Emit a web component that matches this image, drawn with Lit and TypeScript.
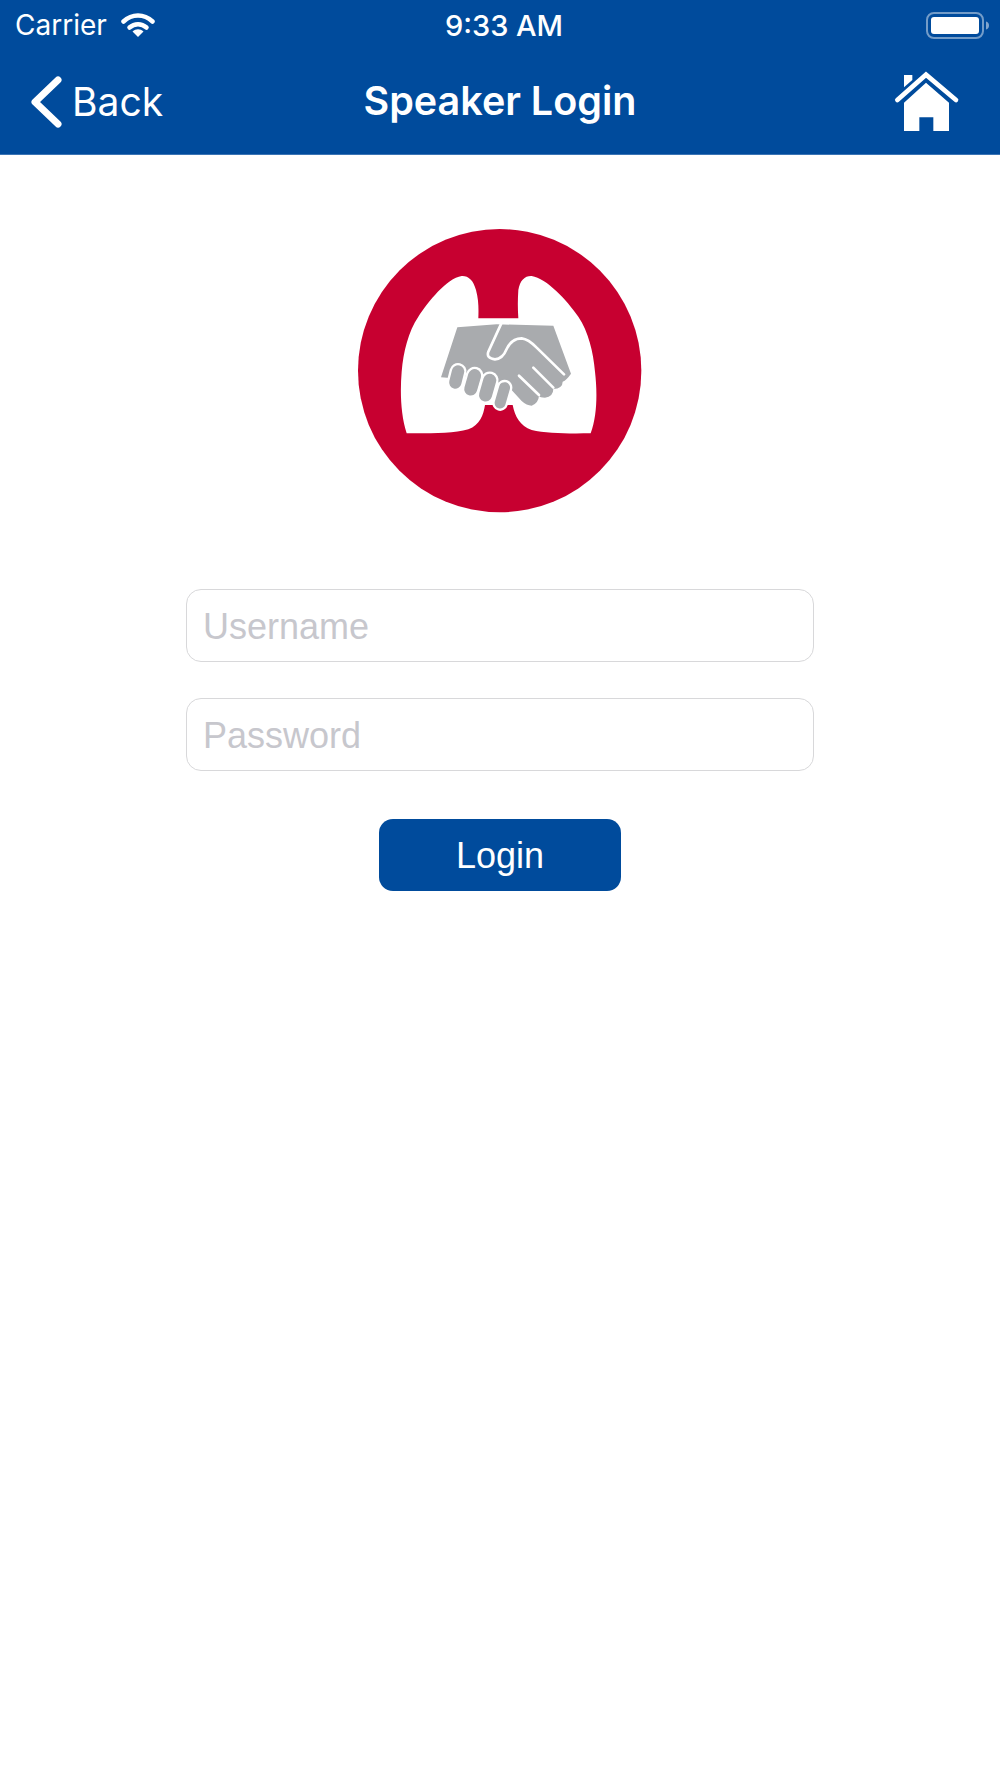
import { css, html, LitElement } from 'lit'
import { customElement } from 'lit/decorators.js'

@customElement('app-root')
export class AppRoot extends LitElement {
  static styles = css`
    :host {
      display: block;
      min-height: 1778px;
      background: #fff;
      font-family: Inter, Roboto, 'Liberation Sans', sans-serif;
    }

    .header {
      background: #004b9c;
      color: #fff;
      height: 154px;
      border-bottom: 1px solid #3a74b5;
    }

    .status {
      display: grid;
      grid-template-columns: 1fr auto 1fr;
      align-items: center;
      height: 50px;
      font-size: 28px;
    }

    .carrier {
      display: flex;
      align-items: center;
      gap: 14px;
      padding-left: 15px;
    }

    .time {
      margin-left: 8px;
      font-size: 29px;
      font-weight: 500;
    }

    .battery {
      justify-self: end;
      margin-right: 10px;
      display: block;
    }

    .nav {
      display: grid;
      grid-template-columns: 1fr auto 1fr;
      align-items: center;
      height: 104px;
    }

    .back {
      display: flex;
      align-items: center;
      gap: 8px;
      padding-left: 28px;
      font-size: 39px;
    }

    .back span,
    .title {
      margin-bottom: 2px;
    }

    .title {
      font-size: 39.500px;
      font-weight: 600;
    }

    .home {
      justify-self: end;
      margin: 0 20px 5px 0;
      display: block;
    }

    .logo {
      display: block;
      margin: 60px auto 0;
    }

    .form {
      display: flex;
      flex-direction: column;
      align-items: center;
      margin-top: 54px;
    }

    input {
      box-sizing: border-box;
      width: 628px;
      height: 73px;
      margin-bottom: 36px;
      padding: 2px 16px 0;
      background: #fff;
      border: 1px solid #d8d8da;
      border-radius: 15px;
      outline: none;
      font-family: 'Liberation Sans', Arial, sans-serif;
      font-size: 36px;
    }

    input::placeholder {
      color: #c7c7cd;
      opacity: 1;
    }

    button {
      width: 242px;
      height: 72px;
      margin-top: 12px;
      padding: 2px 0 0;
      background: #004b9c;
      border: none;
      border-radius: 14px;
      color: #fff;
      font-family: 'Liberation Sans', Arial, sans-serif;
      font-size: 36px;
    }
  `

  render () {
    return html`
      <div class="header">
        <div class="status">
          <div class="carrier">
            <span>Carrier</span>
            <svg width="34" height="24" viewBox="0 0 34 24">
              <path d="M2.5 8.5C11 .5 23 .5 31.5 8.5" fill="none" stroke="#fff" stroke-width="4.500" stroke-linecap="round"/>
              <path d="M8.5 14.5C13.5 10 20.500 10 25.500 14.500" fill="none" stroke="#fff" stroke-width="4.500" stroke-linecap="round"/>
              <path d="M11.500 18.500C15 15.500 19 15.500 22.500 18.500L17 24Z" fill="#fff"/>
            </svg>
          </div>
          <span class="time">9:33 AM</span>
          <svg class="battery" width="64" height="28" viewBox="0 0 64 28">
            <rect x="1" y="2" width="56" height="25" rx="7" fill="none" stroke="#fff" stroke-opacity=".45" stroke-width="2"/>
            <rect x="5" y="6" width="48" height="17" rx="3" fill="#fff"/>
            <path d="M60 10.500c2 .5 3 2 3 4s-1 3.500-3 4z" fill="#fff" fill-opacity=".5"/>
          </svg>
        </div>
        <div class="nav">
          <div class="back">
            <svg width="36" height="54" viewBox="0 0 36 54">
              <polyline points="30,5 7,27 30,49" fill="none" stroke="#fff" stroke-width="7" stroke-linecap="round" stroke-linejoin="round"/>
            </svg>
            <span>Back</span>
          </div>
          <span class="title">Speaker Login</span>
          <svg class="home" width="100" height="80" viewBox="0 0 300 240">
            <path d="M72 45H97V60L72 82Z" fill="#fff"/>
            <polyline points="52,120 138,44 228,120" fill="none" stroke="#fff" stroke-width="14" stroke-linecap="round"/>
            <path d="M72 128L138 68L207 128V213H160V172H118V213H72Z" fill="#fff"/>
          </svg>
        </div>
      </div>

      <svg class="logo" width="320" height="320" viewBox="0 0 960 960">
        <circle cx="479" cy="467" r="425" fill="#c70030"/>
        <path d="M415 310C416 280 416 255 408 225C400 195 385 182 365 183C320 190 265 260 235 305C205 350 190 410 185 470C180 530 182 600 200 655C270 655 340 656 385 643C420 630 430 600 435 570L518 570C525 605 540 632 575 645C620 656 690 656 752 655C772 600 772 530 765 470C760 410 745 350 715 305C680 255 620 190 575 183C555 182 540 195 535 225C533 255 533 280 535 310Z" fill="#fff"/>
        <path d="M352 337L470 328L640 332L693 476Q680 495 668 500Q668 520 640 522Q640 545 615 548Q600 548 597 543Q595 565 575 572Q560 572 545 558L510 520L470 500L303 487Z" fill="#a9abae"/>
        <g fill="#a9abae" stroke="#fff" stroke-width="7">
          <rect x="328" y="447" width="44" height="78" rx="22" transform="rotate(14 350 486)"/>
          <rect x="375" y="458" width="46" height="88" rx="23" transform="rotate(16 398 502)"/>
          <rect x="420" y="472" width="46" height="92" rx="23" transform="rotate(16 443 518)"/>
          <rect x="467" y="497" width="40" height="88" rx="20" transform="rotate(16 487 541)"/>
        </g>
        <g fill="none" stroke="#fff" stroke-width="8" stroke-linecap="round">
          <path d="M484 325L445 410Q438 430 465 433Q488 432 500 402Q515 370 545 370Q565 372 590 398L672 478"/>
          <path d="M580 458L640 518"/>
          <path d="M537 482L597 540"/>
        </g>
      </svg>

      <div class="form">
        <input type="text" placeholder="Username" />
        <input type="password" placeholder="Password" />
        <button>Login</button>
      </div>
    `
  }
}
